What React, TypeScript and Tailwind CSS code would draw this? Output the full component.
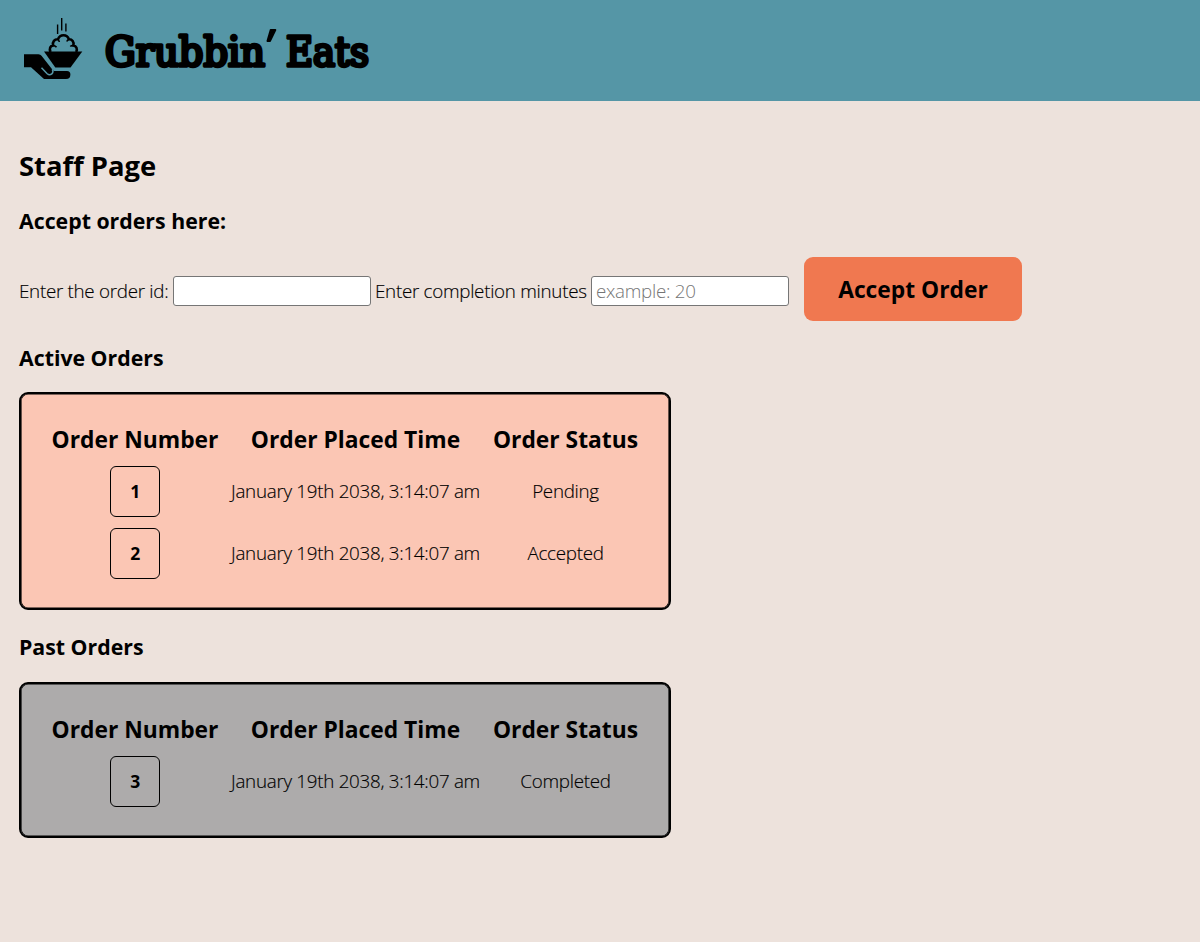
import React from "react";

type Order = { id: number; placed: string; status: string };

const active: Order[] = [
  { id: 1, placed: "January 19th 2038, 3:14:07 am", status: "Pending" },
  { id: 2, placed: "January 19th 2038, 3:14:07 am", status: "Accepted" },
];
const past: Order[] = [
  { id: 3, placed: "January 19th 2038, 3:14:07 am", status: "Completed" },
];

function Logo() {
  return (
    <svg className="block h-[101px] w-[400px]" viewBox="0 0 400 101" role="img">
      <path d="M57.600 24.500v9.500M61.700 18v12.500M65.900 23.500v8" stroke="#000" strokeWidth="1.4" fill="none" />
      <path
        d="M50.500 52c-1.500-3.500-.2-6.300 2.600-6.600-.8-3.600 1.400-6.400 4.900-6.200 1-2.600 3-3.900 5.500-3.900s4.500 1.300 5.400 3.900c3.300-.1 5.300 2.600 4.500 6.200 3 .6 4.300 3.300 2.800 6.600"
        fill="none"
        stroke="#000"
        strokeWidth="2.6"
      />
      <path
        d="M53.500 45.500q2 .2 3 1.700M58 39.500q1.200 1 1.300 2.500M73.500 45.500q-2-.3-3.200 1M68.800 39.500q-1.500.6-2 2"
        fill="none"
        stroke="#000"
        strokeWidth="1.600"
      />
      <path d="M44 51.600H82.300L70.500 67.500H55.300Z" />
      <path d="M24 54.200H38.500Q40.500 54.200 41.500 55.700L52.300 69.600L54 71H67Q70.400 71 70.400 74.500Q70.400 79 66 79H44L31 67.200H24Z" />
      <path
        d="M41.500 67.800L47.200 73.800Q49.500 75.800 51.800 73.900Q53.800 71.800 52.300 69.300"
        fill="none"
        stroke="#5596a6"
        strokeWidth="1.500"
      />
      <g
        fontFamily="'DejaVu Serif Condensed','DejaVu Serif',serif"
        fontWeight="400"
        fontSize="41"
        stroke="#000"
        strokeWidth="3.400"
        strokeLinejoin="round"
      >
        <text x="105" y="65.600" textLength="160" lengthAdjust="spacingAndGlyphs">Grubbin</text>
        <text x="266.500" y="73.500" fontSize="60" fontWeight="700" strokeWidth="2" textLength="10" lengthAdjust="spacingAndGlyphs">′</text>
        <text x="286" y="65.600" textLength="83" lengthAdjust="spacingAndGlyphs">Eats</text>
      </g>
    </svg>
  );
}

function OrderTable({ orders, tone }: { orders: Order[]; tone: string }) {
  return (
    <div className={`w-[652px] rounded-[9px] border-2 border-black shadow-[inset_0_0_0_0.6px_#000] px-px pt-[28px] pb-[24px] ${tone}`}>
      <div className="mb-[2px] grid grid-cols-[226px_215px_205px] text-center text-[22.800px] leading-[36px] font-bold">
        <div>Order Number</div>
        <div>Order Placed Time</div>
        <div>Order Status</div>
      </div>
      {orders.map((o) => (
        <div key={o.id} className="grid h-[62px] grid-cols-[226px_215px_205px] items-center text-center text-[18.800px] tracking-[-0.28px]">
          <div className="flex justify-center">
            <div className="flex h-[51px] w-[50px] items-center justify-center rounded-[6px] border border-black text-[17.500px] font-bold">
              {o.id}
            </div>
          </div>
          <div className="flex justify-center whitespace-nowrap [-webkit-text-stroke:0.15px_#000]">{o.placed}</div>
          <div className="[-webkit-text-stroke:0.15px_#000]">{o.status}</div>
        </div>
      ))}
    </div>
  );
}

export default function App() {
  return (
    <div className="h-[942px] w-[1200px] overflow-hidden bg-[#ede2dc] font-['Open_Sans',sans-serif] font-light text-black">
      <header className="h-[101px] bg-[#5596a6]">
        <Logo />
      </header>
      <main className="px-[19px] pt-[45px]">
        <h1 className="text-[27.400px] leading-[40px] font-bold">Staff Page</h1>
        <h2 className="mt-[19px] text-[21.300px] leading-[32px] font-bold">Accept orders here:</h2>
        <form className="mt-[20px] flex h-[64px] items-center text-[18.800px] tracking-[-0.28px]">
          <label className="w-[154px] whitespace-nowrap pt-[5px] [-webkit-text-stroke:0.15px_#000]">Enter the order id:</label>
          <input className="mt-[4px] h-[30px] w-[198px] rounded-[3px] border border-[#767676] bg-white px-[5px]" />
          <label className="ml-[4px] w-[216px] whitespace-nowrap pt-[5px] [-webkit-text-stroke:0.15px_#000]">Enter completion minutes</label>
          <input
            placeholder="example: 20"
            className="mt-[4px] h-[30px] w-[198px] rounded-[3px] border border-[#767676] bg-white px-[4px] placeholder:text-[#757575]"
          />
          <button type="button" className="ml-[15px] h-[64px] w-[218px] rounded-[9px] bg-[#f07850] pt-[2px] text-[22.800px] font-bold tracking-normal">
            Accept Order
          </button>
        </form>
        <h2 className="mt-[21px] mb-[18px] text-[21.300px] leading-[32px] font-bold">Active Orders</h2>
        <OrderTable orders={active} tone="bg-[#fbc6b4]" />
        <h2 className="mt-[21px] mb-[19px] text-[21.300px] leading-[32px] font-bold">Past Orders</h2>
        <OrderTable orders={past} tone="bg-[#adabab]" />
      </main>
    </div>
  );
}
